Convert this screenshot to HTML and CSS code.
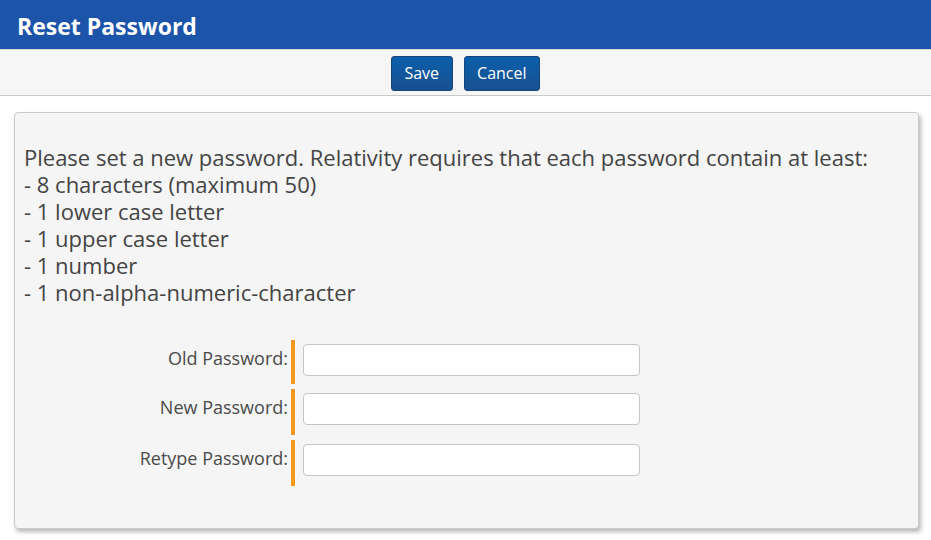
FILE: index.html
```html
<!DOCTYPE html>
<html>
<head>
<meta charset="utf-8">
<link rel="stylesheet" href="styles.css">
</head>
<body>
<header class="title-bar">
  <h1 class="title">Reset Password</h1>
</header>
<div class="toolbar">
  <button class="btn">Save</button>
  <button class="btn">Cancel</button>
</div>
<main class="content">
  <section class="panel">
    <div class="instructions">
      <div>Please set a new password. Relativity requires that each password contain at least:</div>
      <div>- 8 characters (maximum 50)</div>
      <div>- 1 lower case letter</div>
      <div>- 1 upper case letter</div>
      <div>- 1 number</div>
      <div>- 1 non-alpha-numeric-character</div>
    </div>
    <div class="form">
      <div class="form-row">
        <label class="label">Old Password:</label>
        <span class="req"></span>
        <input class="field" type="password">
      </div>
      <div class="form-row">
        <label class="label">New Password:</label>
        <span class="req"></span>
        <input class="field" type="password">
      </div>
      <div class="form-row">
        <label class="label">Retype Password:</label>
        <span class="req"></span>
        <input class="field" type="password">
      </div>
    </div>
  </section>
</main>
</body>
</html>
```

FILE: styles.css
```css
html, body {
  margin: 0;
  padding: 0;
  background: #ffffff;
  font-family: "Open Sans", "Liberation Sans", sans-serif;
}

.title-bar {
  height: 49px;
  background: #1c54a9;
  display: flex;
  align-items: center;
  padding-left: 17px;
}

.title {
  margin: 0;
  color: #ffffff;
  font-size: 23px;
  font-weight: 700;
  line-height: 1;
  padding-top: 3px;
}

.toolbar {
  height: 45px;
  background: #f6f6f6;
  border-top: 1px solid #d6d6d6;
  border-bottom: 1px solid #c9c9c9;
  display: flex;
  justify-content: center;
  align-items: center;
  gap: 11px;
}

.btn {
  height: 35px;
  padding: 0 12.5px;
  margin-top: 1px;
  font-family: "Open Sans", "Liberation Sans", sans-serif;
  font-size: 16px;
  color: #ffffff;
  background: linear-gradient(#0b5fab, #18508f);
  border: 1px solid #15467e;
  border-radius: 3px;
}

.content {
  padding: 16px 12px 12px 14px;
}

.panel {
  width: 905px;
  box-sizing: border-box;
  background: #f5f5f5;
  border: 1px solid #cacaca;
  border-radius: 4px;
  box-shadow: 2px 3px 4px rgba(0, 0, 0, 0.28);
  padding: 31px 0 42px 0;
}

.instructions {
  padding-left: 9px;
  font-size: 22px;
  line-height: 27px;
  color: #444444;
}

.form {
  margin-top: 34px;
  display: flex;
  flex-direction: column;
  gap: 5px;
}

.form-row {
  display: flex;
  height: 44px;
}

.form-row + .form-row {
  height: 46px;
}

.label {
  width: 273px;
  text-align: right;
  font-size: 18px;
  line-height: 32px;
  margin-top: 2px;
  color: #4a4a4a;
}

.req {
  width: 4px;
  margin-left: 3px;
  background: #f39a1e;
}

.field {
  width: 337px;
  height: 32px;
  box-sizing: border-box;
  margin: 4px 0 0 8px;
  background: #ffffff;
  border: 1px solid #c4c4c4;
  border-radius: 4px;
}
```
